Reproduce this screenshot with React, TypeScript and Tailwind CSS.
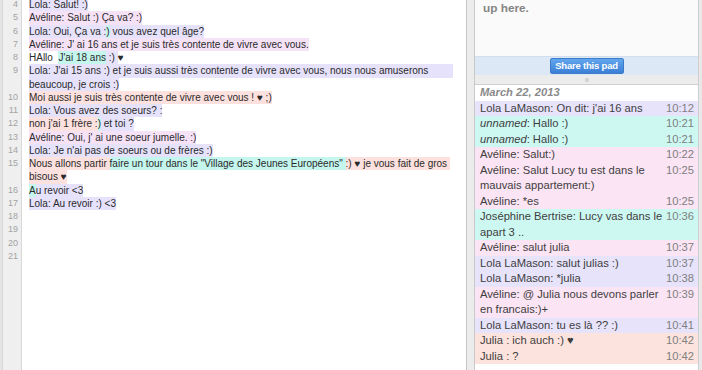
import React from "react";

type Seg = [string, string];
type Line = { n?: number; segs: Seg[] };

const L = "bg-[#e6e2fc]";
const P = "bg-[#f6e2f7]";
const C = "bg-[#c4f6ee]";
const S = "bg-[#fde1de]";
const N = "";

const lines: Line[] = [
  { n: 4, segs: [["Lola: Salut! :)", L]] },
  { n: 5, segs: [["Avéline: Salut :) Ça va? :)", P]] },
  { n: 6, segs: [["Lola: Oui, Ça va :", L], [")", C], [" vous avez quel âge?", L]] },
  { n: 7, segs: [["Avéline: J' ai 16 ans et je suis très contente de vivre avec vous.", P]] },
  { n: 8, segs: [["HAllo  ", N], ["J'ai 18 ans", C], [" :) ", L], ["♥", N]] },
  { n: 9, segs: [["Lola: J'ai 15 ans :) et je suis aussi très contente de vivre avec vous, nous nous amuserons", L + " pr-[25px]"]] },
  { segs: [["beaucoup, je crois :)", L]] },
  { n: 10, segs: [["Moi aussi je suis très contente de vivre avec vous ! ♥ ;)", S]] },
  { n: 11, segs: [["Lola: Vous avez des soeurs? :", L]] },
  { n: 12, segs: [["non j'ai 1 frère :", S], [")", C], [" et toi ?", L]] },
  { n: 13, segs: [["Avéline: Oui, j' ai une soeur jumelle. :)", P]] },
  { n: 14, segs: [["Lola: Je n'ai pas de soeurs ou de frères :)", L]] },
  {
    n: 15,
    segs: [
      ["Nous allons partir ", S],
      ["faire un tour dans le \"Village des Jeunes Européens\" ", C],
      [":) ♥ je vous fait de gros ", S],
    ],
  },
  { segs: [["bisous ♥", S]] },
  { n: 16, segs: [["A", C], ["u revoir <3", L]] },
  { n: 17, segs: [["Lola: Au revoir :) <3", L]] },
  { n: 18, segs: [] },
  { n: 19, segs: [] },
  { n: 20, segs: [] },
  { n: 21, segs: [] },
];

const CL = "bg-[#e7e3fb]";
const CC = "bg-[#cdf8f2]";
const CP = "bg-[#fbe4f4]";
const CS = "bg-[#fde3dd]";

type Row = { who: string; italic?: boolean; text: string[]; t: string; c: string };

const rows: Row[] = [
  { who: "Lola LaMason", text: [": On dit: j'ai 16 ans"], t: "10:12", c: CL },
  { who: "unnamed", italic: true, text: [": Hallo :)"], t: "10:21", c: CC },
  { who: "unnamed", italic: true, text: [": Hallo :)"], t: "10:21", c: CC },
  { who: "Avéline", text: [": Salut:)"], t: "10:22", c: CP },
  { who: "Avéline", text: [": Salut Lucy tu est dans le", "mauvais appartement:)"], t: "10:25", c: CP },
  { who: "Avéline", text: [": *es"], t: "10:25", c: CP },
  { who: "Joséphine Bertrise", text: [": Lucy vas dans le", "apart 3 .."], t: "10:36", c: CC },
  { who: "Avéline", text: [": salut julia"], t: "10:37", c: CP },
  { who: "Lola LaMason", text: [": salut julias :)"], t: "10:37", c: CL },
  { who: "Lola LaMason", text: [": *julia"], t: "10:38", c: CL },
  { who: "Avéline", text: [": @ Julia nous devons parler", "en francais:)+"], t: "10:39", c: CP },
  { who: "Lola LaMason", text: [": tu es là ?? :)"], t: "10:41", c: CL },
  { who: "Julia ", text: [": ich auch :) ♥"], t: "10:42", c: CS },
  { who: "Julia ", text: [": ?"], t: "10:42", c: CS },
];

export default function App() {
  return (
    <div className="w-[702px] h-[370px] overflow-hidden flex bg-[#e8e8e8] font-['Liberation_Sans',Arial,sans-serif]">
      {/* Editor */}
      <div className="flex h-full w-[467px] shrink-0 border-r border-[#c6c6c6] bg-white">
        <div className="w-[2px] h-full bg-[#e4e4e4]" />
        <div className="w-[20px] h-full bg-[#efefef] border-l border-[#bdbdbd] border-r border-[#d8d8d8]">
          <div className="mt-[-2px] flex flex-col">
            {lines.map((l, i) => (
              <div
                key={i}
                className="h-[13.25px] leading-[13.25px] text-[9px] text-[#a3a3a3] text-right pr-[3px]"
              >
                {l.n ?? ""}
              </div>
            ))}
          </div>
        </div>
        <div className="flex-1 pl-[7px] min-w-0">
          <div className="mt-[-2px] flex flex-col">
            {lines.map((l, i) => (
              <div key={i} className="h-[13.25px] leading-[13.25px] text-[10px] text-[#2a2a2a] whitespace-pre flex">
                {l.segs.map(([t, c], j) => (
                  <span key={j} className={"inline-block h-[13.25px] " + c}>
                    {t}
                  </span>
                ))}
              </div>
            ))}
          </div>
        </div>
      </div>

      {/* divider strip */}
      <div className="w-[8px] h-full shrink-0 bg-[#ececec] border-r border-[#c9c9c9]" />

      {/* Sidebar */}
      <div className="w-[224px] h-full shrink-0 flex flex-col">
        <div className="h-[75px] flex flex-col bg-[#fafafa] border-r border-[#cfcfcf]">
          <div className="flex-1 pl-[8px]">
            <div className="mt-[1px] text-[11.8px] leading-[14px] font-bold text-[#858585]">up here.</div>
          </div>
          <div className="h-[19px] bg-[#dce8f6] border-t border-[#d3dfec] flex items-center justify-center">
            <div className="w-[74px] h-[16px] rounded-[2px] bg-gradient-to-b from-[#62a6ee] to-[#3b7fd6] border border-[#3d7cca] flex items-center justify-center text-white text-[9.5px] font-bold tracking-[-0.2px]">
              Share this pad
            </div>
          </div>
        </div>
        <div className="h-[9px] bg-[#ececec] border-r border-[#cfcfcf] flex items-center justify-center">
          <div className="w-[4px] h-[4px] rounded-full border border-[#c4c4c4]" />
        </div>
        <div className="flex-1 bg-white border-t border-r border-[#cfcfcf] flex flex-col overflow-hidden">
          <div className="h-[15.5px] leading-[15.5px] pl-[5px] text-[11.2px] font-bold italic text-[#8a8a8a] shrink-0">
            March 22, 2013
          </div>
          {rows.map((r, i) => (
            <div key={i} className={"flex pl-[5px] pr-[4px] text-[11.2px] leading-[15.5px] shrink-0 " + r.c}>
              <div className="flex-1 text-[#3e3e3e] whitespace-nowrap">
                {r.text.map((t, j) => (
                  <div key={j}>
                    {j === 0 ? (
                      <>
                        <span className={r.italic ? "italic" : ""}>{r.who}</span>
                        {t}
                      </>
                    ) : (
                      t
                    )}
                  </div>
                ))}
              </div>
              <div className="w-[28px] text-right text-[#808080]">{r.t}</div>
            </div>
          ))}
        </div>
      </div>
      <div className="flex-1 h-full bg-[#e8e8e8]" />
    </div>
  );
}
